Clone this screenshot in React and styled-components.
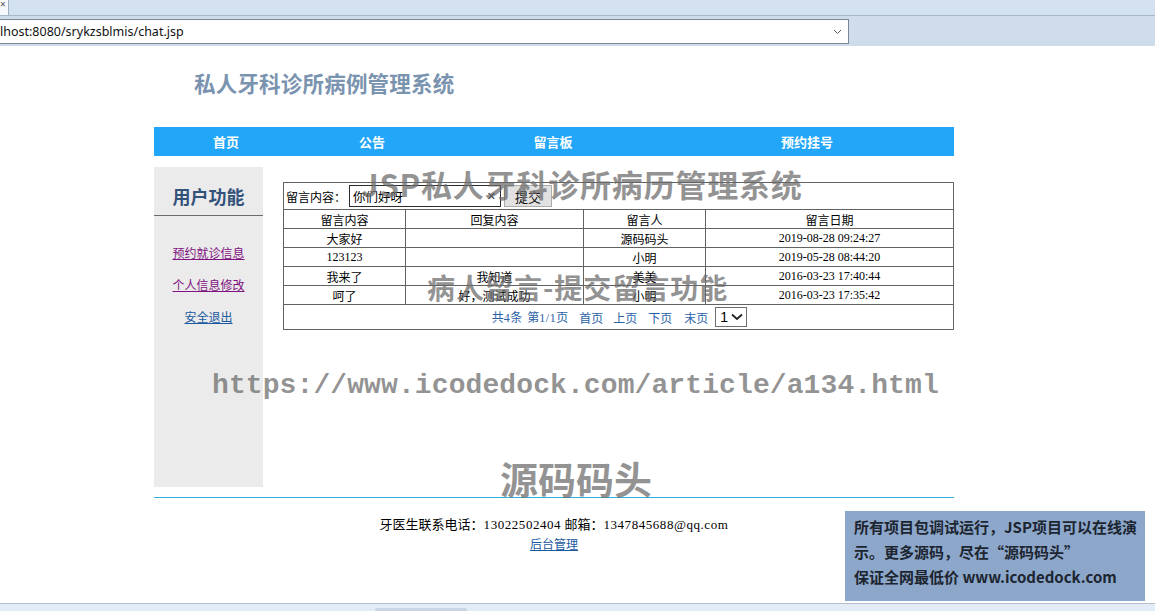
import React from "react";
import styled, { createGlobalStyle } from "styled-components";

const GlobalStyle = createGlobalStyle`
  html, body { margin: 0; padding: 0; background: #ffffff; }
  body {
    font-family: "Liberation Serif", "Noto Sans CJK SC", serif;
    font-size: 12px;
    color: #000;
  }
  * { box-sizing: border-box; }
`;

const Screen = styled.div`
  position: relative;
  width: 1155px;
  height: 611px;
  overflow: hidden;
  display: flex;
  flex-direction: column;
  background: #fff;
`;

/* ---------- browser chrome ---------- */
const TabStrip = styled.div`
  height: 16px;
  background: #d3e1f1;
  border-bottom: 1px solid #a7b6c8;
  display: flex;
`;
const TabStub = styled.div`
  width: 9px;
  height: 15px;
  background: #f4f7fb;
  border-right: 1px solid #9fb0c4;
  font-family: "Noto Sans", sans-serif;
  font-size: 10px;
  line-height: 8px;
  color: #555;
  overflow: hidden;
`;
const AddressRow = styled.div`
  height: 30px;
  background: #cfdcec;
  padding-top: 3px;
`;
const AddressBox = styled.div`
  width: 849px;
  height: 25px;
  background: #fff;
  border: 1px solid #7b8794;
  border-left: none;
  display: flex;
  align-items: center;
  justify-content: space-between;
  padding-right: 6px;
  font-family: "Noto Sans", "Liberation Sans", sans-serif;
  font-size: 12.5px;
  color: #111;
`;
const BottomChrome = styled.div`
  height: 8px;
  margin-top: auto;
  background: #e3ebf6;
  border-top: 1px solid #b5bfcc;
  display: flex;
  align-items: flex-end;
`;
const BottomTab = styled.div`
  margin-left: 375px;
  width: 92px;
  height: 3px;
  background: #c9d6e6;
  border-radius: 2px 2px 0 0;
`;

/* ---------- page ---------- */
const Page = styled.div`
  margin-left: 154px;
  width: 800px;
  display: flex;
  flex-direction: column;
`;
const Header = styled.div`
  height: 81px;
  display: flex;
  align-items: center;
  padding-left: 40px;
  padding-bottom: 8px;
`;
const Title = styled.h1`
  margin: 0;
  font-family: "Noto Sans CJK SC", serif;
  font-size: 21.5px;
  font-weight: 700;
  color: #7a93af;
  letter-spacing: 0.2px;
`;
const Nav = styled.div`
  height: 29px;
  background: #22a6f8;
  display: flex;
`;
const NavItem = styled.div`
  width: ${(p) => p.$w}px;
  display: flex;
  align-items: center;
  justify-content: center;
  padding-bottom: 1px;
  color: #fff;
  font-family: "Noto Sans CJK SC", sans-serif;
  font-size: 13px;
  font-weight: 700;
`;

const Body = styled.div`
  margin-top: 11px;
  display: flex;
`;
const Sidebar = styled.div`
  width: 110px;
  height: 320px;
  background: #ebebeb;
  display: flex;
  flex-direction: column;
  align-items: center;
`;
const SideHead = styled.div`
  width: 100%;
  height: 49px;
  border-bottom: 1px solid #6b6b6b;
  display: flex;
  align-items: center;
  justify-content: center;
  padding-top: 9px;
  font-family: "Noto Sans CJK SC", serif;
  font-size: 18px;
  font-weight: 700;
  color: #33527a;
`;
const SideLinks = styled.div`
  display: flex;
  flex-direction: column;
  align-items: center;
  gap: 14px;
  padding-top: 28px;
`;
const SideLink = styled.a`
  font-family: "Noto Sans CJK SC", sans-serif;
  font-size: 12px;
  line-height: 18px;
  color: ${(p) => (p.$visited ? "#7f1280" : "#1a5aa0")};
  text-decoration: underline;
  cursor: pointer;
`;

const Main = styled.div`
  flex: 1;
  padding: 15px 0 0 20px;
`;
const Table = styled.table`
  width: 670px;
  border-collapse: collapse;
  border: 1px solid #5a5a5a;
  font-family: "Liberation Serif", "Noto Sans CJK SC", serif;
  font-size: 12px;
  table-layout: fixed;
`;
const Cell = styled.td`
  border: 1px solid #626262;
  height: ${(p) => p.$h || 19}px;
  padding: 0;
  text-align: ${(p) => p.$align || "center"};
  vertical-align: middle;
  line-height: 17px;
  font-family: ${(p) =>
    p.$num ? `"Liberation Serif", serif` : `"Noto Sans CJK SC", "Liberation Serif", sans-serif`};
`;
const FormLine = styled.div`
  display: flex;
  align-items: center;
  padding-left: 2px;
  gap: 3px;
  font-family: "Noto Sans CJK SC", sans-serif;
  font-size: 12px;
`;
const TextBox = styled.div`
  width: 152px;
  height: 22px;
  border: 1px solid #2c2c2c;
  display: flex;
  align-items: center;
  justify-content: space-between;
  padding: 0 4px 0 3px;
  font-size: 12.5px;
  background: #fff;
`;
const Clear = styled.span`
  font-family: "DejaVu Sans", sans-serif;
  font-size: 11px;
  font-weight: 700;
  color: #333;
`;
const SubmitBtn = styled.button`
  width: 48px;
  height: 22px;
  border: 1px solid #adadad;
  background: #e1e1e1;
  font-family: "Noto Sans CJK SC", sans-serif;
  font-size: 13px;
  color: #111;
  padding: 0;
`;
const Pager = styled.div`
  display: flex;
  align-items: center;
  justify-content: center;
  padding-left: 2px;
  font-family: "Noto Sans CJK SC", "Liberation Serif", sans-serif;
  font-size: 12px;
  color: #2a62a8;
`;
const PagerLink = styled.span`
  margin-right: ${(p) => p.$gap}px;
`;
const Num = styled.span`
  font-family: "Liberation Serif", serif;
  letter-spacing: 0.5px;
`;
const PageSelect = styled.div`
  width: 32px;
  height: 20px;
  border: 1px solid #6e6e6e;
  display: flex;
  align-items: center;
  justify-content: space-between;
  padding: 0 3px 0 4px;
  color: #000;
  font-family: "Liberation Sans", sans-serif;
  font-size: 14px;
`;

const FooterRule = styled.div`
  margin-top: 10px;
  height: 1px;
  background: #2fb0da;
`;
const Footer = styled.div`
  padding-top: 17px;
  text-align: center;
  font-size: 13px;
  line-height: 19px;
  font-family: "Liberation Serif", "Noto Sans CJK SC", serif;
`;
const FooterNum = styled.span`
  letter-spacing: 0.55px;
`;
const FooterLink = styled.a`
  font-family: "Noto Sans CJK SC", sans-serif;
  font-size: 12px;
  color: #1a5aa0;
  text-decoration: underline;
`;

/* ---------- overlays ---------- */
const Watermark = styled.div`
  position: absolute;
  left: ${(p) => p.$x}px;
  top: ${(p) => p.$y}px;
  font-family: ${(p) => (p.$mono ? `"Liberation Mono", monospace` : `"Noto Sans CJK SC", sans-serif`)};
  font-size: ${(p) => p.$size}px;
  font-weight: 700;
  color: rgba(105, 105, 105, 0.72);
  white-space: nowrap;
  line-height: 1;
  pointer-events: none;
  letter-spacing: ${(p) => p.$ls || 0}px;
`;
const AdBox = styled.div`
  position: absolute;
  right: 10px;
  bottom: 10px;
  width: 300px;
  height: 90px;
  background: #8ca7ca;
  padding: 3px 0 0 9px;
  font-family: "Noto Sans CJK SC", sans-serif;
  font-size: 15px;
  font-weight: 700;
  line-height: 25px;
  color: #1c2530;
`;

const rows = [
  { msg: "大家好", reply: "", who: "源码码头", date: "2019-08-28 09:24:27" },
  { msg: "123123", reply: "", who: "小明", date: "2019-05-28 08:44:20", num: true },
  { msg: "我来了", reply: "我知道", who: "美美", date: "2016-03-23 17:40:44" },
  { msg: "呵了", reply: "好，测试成功", who: "小明", date: "2016-03-23 17:35:42" },
];

export default function App() {
  return (
    <Screen>
      <GlobalStyle />
      <TabStrip>
        <TabStub>×</TabStub>
      </TabStrip>
      <AddressRow>
        <AddressBox>
          <span>lhost:8080/srykzsblmis/chat.jsp</span>
          <svg width="9" height="6" viewBox="0 0 9 6">
            <path d="M1 1 L4.5 4.5 L8 1" fill="none" stroke="#555" strokeWidth="1" />
          </svg>
        </AddressBox>
      </AddressRow>

      <Page>
        <Header>
          <Title>私人牙科诊所病例管理系统</Title>
        </Header>
        <Nav>
          <NavItem $w={144}>首页</NavItem>
          <NavItem $w={148}>公告</NavItem>
          <NavItem $w={214}>留言板</NavItem>
          <NavItem $w={294}>预约挂号</NavItem>
        </Nav>
        <Body>
          <Sidebar>
            <SideHead>用户功能</SideHead>
            <SideLinks>
              <SideLink $visited>预约就诊信息</SideLink>
              <SideLink $visited>个人信息修改</SideLink>
              <SideLink>安全退出</SideLink>
            </SideLinks>
          </Sidebar>
          <Main>
            <Table>
              <colgroup>
                <col style={{ width: 122 }} />
                <col style={{ width: 178 }} />
                <col style={{ width: 122 }} />
                <col style={{ width: 248 }} />
              </colgroup>
              <tbody>
                <tr>
                  <Cell colSpan={4} $h={27} $align="left">
                    <FormLine>
                      <span>留言内容：</span>
                      <TextBox>
                        <span>你们好呀</span>
                        <Clear>✕</Clear>
                      </TextBox>
                      <SubmitBtn>提交</SubmitBtn>
                    </FormLine>
                  </Cell>
                </tr>
                <tr>
                  <Cell>留言内容</Cell>
                  <Cell>回复内容</Cell>
                  <Cell>留言人</Cell>
                  <Cell>留言日期</Cell>
                </tr>
                {rows.map((r, i) => (
                  <tr key={i}>
                    <Cell $num={r.num}>{r.msg}</Cell>
                    <Cell>{r.reply}</Cell>
                    <Cell>{r.who}</Cell>
                    <Cell $num>{r.date}</Cell>
                  </tr>
                ))}
                <tr>
                  <Cell colSpan={4} $h={25}>
                    <Pager>
                      <PagerLink $gap={5}>
                        共<Num>4</Num>条
                      </PagerLink>
                      <PagerLink $gap={11}>
                        第<Num>1/1</Num>页
                      </PagerLink>
                      <PagerLink $gap={10}>首页</PagerLink>
                      <PagerLink $gap={11}>上页</PagerLink>
                      <PagerLink $gap={12}>下页</PagerLink>
                      <PagerLink $gap={7}>末页</PagerLink>
                      <PageSelect>
                        <span>1</span>
                        <svg width="12" height="8" viewBox="0 0 12 8">
                          <path d="M1 1.5 L6 6 L11 1.5" fill="none" stroke="#222" strokeWidth="1.8" />
                        </svg>
                      </PageSelect>
                    </Pager>
                  </Cell>
                </tr>
              </tbody>
            </Table>
          </Main>
        </Body>
        <FooterRule />
        <Footer>
          <div>
            牙医生联系电话：<FooterNum>13022502404</FooterNum> 邮箱：
            <FooterNum>1347845688@qq.com</FooterNum>
          </div>
          <FooterLink>后台管理</FooterLink>
        </Footer>
      </Page>

      <BottomChrome>
        <BottomTab />
      </BottomChrome>

      <Watermark $x={361} $y={168} $size={31} $ls={0.8}>JSP私人牙科诊所病历管理系统</Watermark>
      <Watermark $x={427} $y={273} $size={28} $ls={1}>病人留言-提交留言功能</Watermark>
      <Watermark $x={212} $y={372} $size={28} $mono $ls={0.1}>
        https://www.icodedock.com/article/a134.html
      </Watermark>
      <Watermark $x={500} $y={459} $size={38}>源码码头</Watermark>

      <AdBox>
        所有项目包调试运行，JSP项目可以在线演
        <br />
        示。更多源码，尽在“源码码头”
        <br />
        保证全网最低价 www.icodedock.com
      </AdBox>
    </Screen>
  );
}
